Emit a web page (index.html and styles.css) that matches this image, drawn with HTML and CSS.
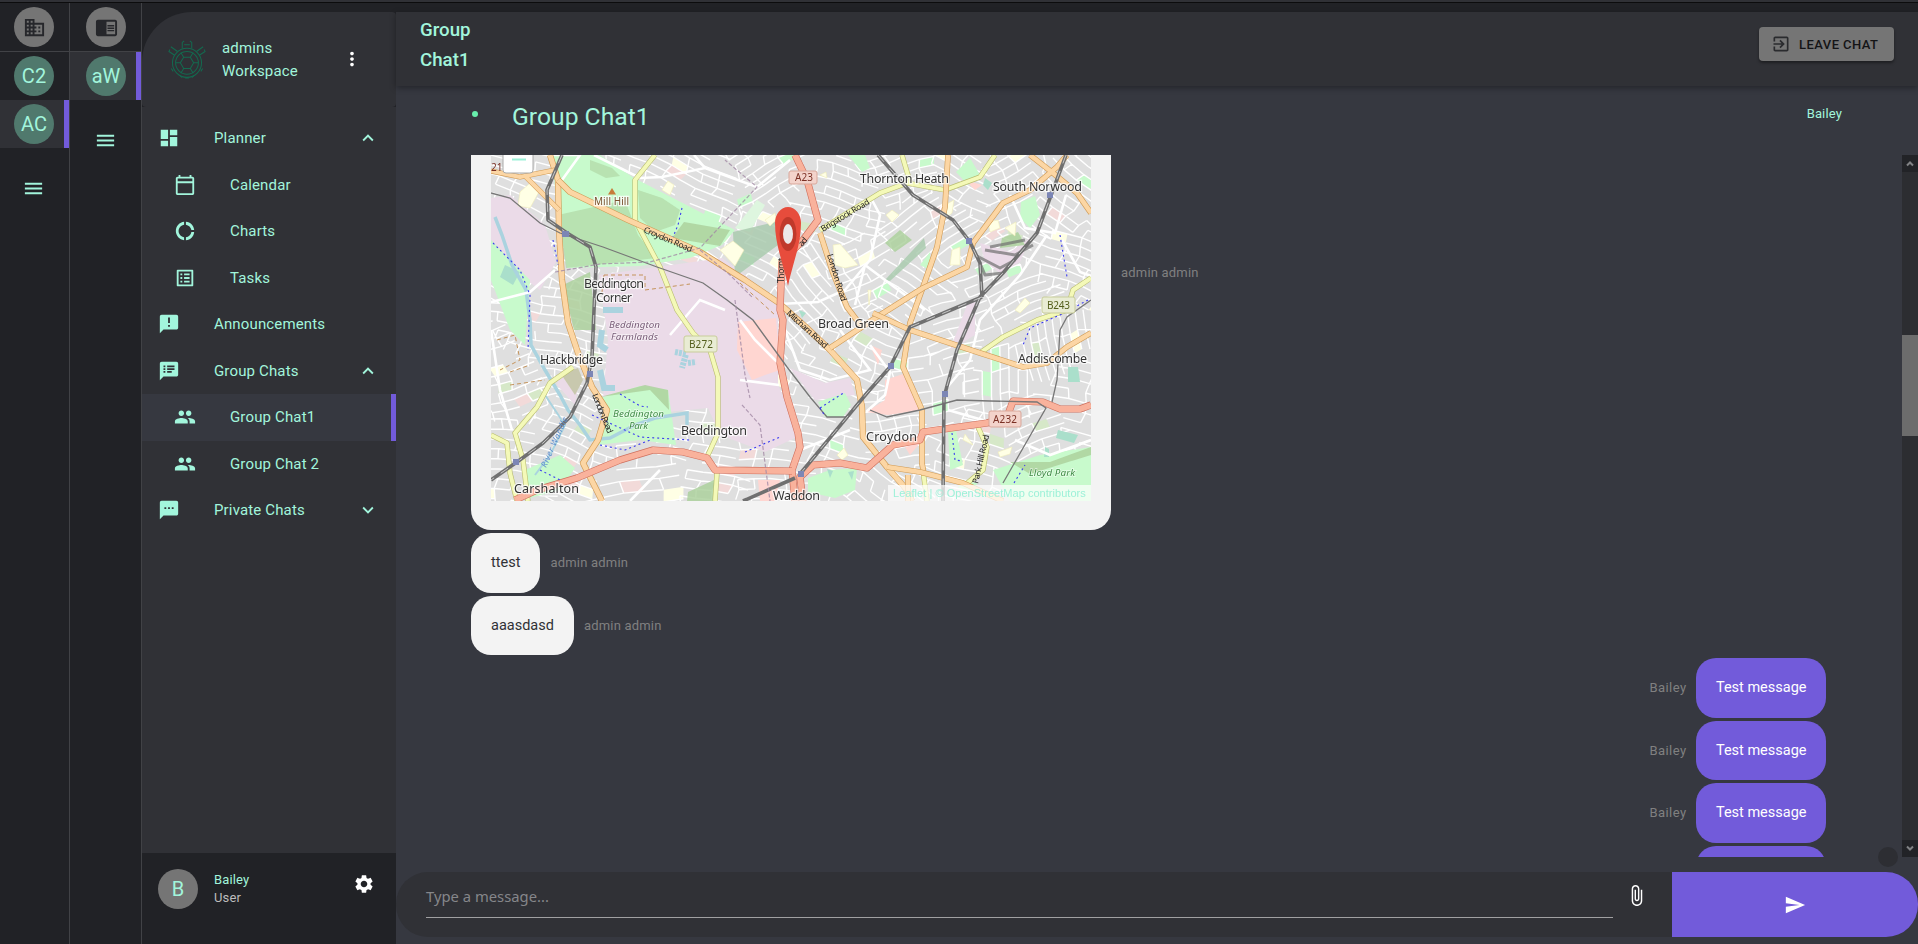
FILE: index.html
```html
<!DOCTYPE html>
<html lang="en">
<head>
<meta charset="utf-8">
<title>Group Chat1</title>
<link rel="stylesheet" href="styles.css">
</head>
<body>
<svg width="0" height="0" class="defs" aria-hidden="true">
  <symbol id="people" viewBox="0 0 24 24"><path d="M16 11c1.66 0 2.99-1.34 2.99-3S17.66 5 16 5c-1.66 0-3 1.34-3 3s1.34 3 3 3zm-8 0c1.66 0 2.99-1.34 2.99-3S9.66 5 8 5C6.34 5 5 6.34 5 8s1.34 3 3 3zm0 2c-2.33 0-7 1.17-7 3.5V19h14v-2.5c0-2.33-4.67-3.5-7-3.5zm8 0c-.29 0-.62.02-.97.05 1.16.84 1.97 1.97 1.97 3.45V19h6v-2.5c0-2.33-4.67-3.5-7-3.5z"/></symbol>
  <symbol id="menu" viewBox="0 0 24 24"><path d="M3 18h18v-2H3v2zm0-5h18v-2H3v2zm0-7v2h18V6H3z"/></symbol>
  <symbol id="less" viewBox="0 0 24 24"><path d="M12 8l-6 6 1.41 1.41L12 10.83l4.59 4.58L18 14z"/></symbol>
  <symbol id="more" viewBox="0 0 24 24"><path d="M16.59 8.59L12 13.17 7.41 8.59 6 10l6 6 6-6z"/></symbol>
</svg>
<div class="topbar"></div>
<div class="app">
  <div class="rail rail-a">
    <div class="rail-head"><div class="avatar grey"><svg class="icon s23 dark" viewBox="0 0 24 24"><path d="M12 7V3H2v18h20V7H12zM6 19H4v-2h2v2zm0-4H4v-2h2v2zm0-4H4V9h2v2zm0-4H4V5h2v2zm4 12H8v-2h2v2zm0-4H8v-2h2v2zm0-4H8V9h2v2zm0-4H8V5h2v2zm10 12h-8v-2h2v-2h-2v-2h2v-2h-2V9h8v10zm-2-8h-2v2h2v-2zm0 4h-2v2h2v-2z"/></svg></div></div>
    <div class="rail-item"><div class="avatar">C2</div></div>
    <div class="rail-item active"><div class="avatar">AC</div></div>
    <div class="rail-menu"><svg class="icon"><use href="#menu"/></svg></div>
  </div>
  <div class="rail rail-b">
    <div class="rail-head"><div class="avatar grey"><svg class="icon s23 dark" viewBox="0 0 24 24"><path d="M13 12h7v1.5h-7zm0-2.5h7V11h-7zm0 5h7V16h-7zM21 4H3c-1.1 0-2 .9-2 2v13c0 1.1.9 2 2 2h18c1.1 0 2-.9 2-2V6c0-1.1-.9-2-2-2zm0 15h-9V6h9v13z"/></svg></div></div>
    <div class="rail-item active"><div class="avatar">aW</div></div>
    <div class="rail-menu"><svg class="icon"><use href="#menu"/></svg></div>
  </div>

  <div class="sidebar">
    <div class="ws-head">
      <svg class="turtle" viewBox="0 0 40 42">
        <circle cx="20" cy="24" r="15.3"/><circle cx="20" cy="24" r="12"/>
        <path d="M16.5 18h7l3.5 6-3.5 6h-7L13 24zM16.5 18l-3-5M23.500 18l3-5M27 24h5M13 24H8M16.500 30l-3 5M23.500 30l3 5"/>
        <path d="M15 9V2.500l2-1.500M25 9V2.500L23 1M17 5h6M10 12L3 7M7 16l-6-4 1-2M30 12l7-5M33 16l6-4-1-2M3.500 30l2 3M36.500 30l-2 3M12 37l3 2.500M28 37l-3 2.500M18 40h4"/>
      </svg>
      <div class="ws-name">admins<br>Workspace</div>
      <svg class="icon white dots" viewBox="0 0 24 24"><path d="M12 8c1.100 0 2-.9 2-2s-.9-2-2-2-2 .9-2 2 .9 2 2 2zm0 2c-1.100 0-2 .9-2 2s.9 2 2 2 2-.9 2-2-.9-2-2-2zm0 6c-1.100 0-2 .9-2 2s.9 2 2 2 2-.9 2-2-.9-2-2-2z"/></svg>
    </div>
    <div class="nav">
      <div class="item"><svg class="icon" viewBox="0 0 24 24"><path d="M3 13h8V3H3v10zm0 8h8v-6H3v6zm10 0h8V11h-8v10zm0-18v6h8V3h-8z"/></svg><span>Planner</span><svg class="icon s22"><use href="#less"/></svg></div>
      <div class="item sub"><svg class="icon" viewBox="0 0 24 24"><path d="M20 3h-1V1h-2v2H7V1H5v2H4c-1.100 0-2 .9-2 2v16c0 1.100.9 2 2 2h16c1.100 0 2-.9 2-2V5c0-1.100-.9-2-2-2zm0 18H4V10h16v11zm0-13H4V5h16v3z"/></svg><span>Calendar</span></div>
      <div class="item sub"><svg class="icon" viewBox="0 0 24 24"><path d="M11 5.080V2c-5 .5-9 4.810-9 10s4 9.500 9 10v-3.080c-3-.48-6-3.400-6-6.920s3-6.440 6-6.920zM18.970 11H22c-.47-5-4-8.530-9-9v3.080C16 5.510 18.540 8 18.970 11zM13 18.920V22c5-.47 8.530-4 9-9h-3.030c-.43 3-2.970 5.490-5.970 5.920z"/></svg><span>Charts</span></div>
      <div class="item sub"><svg class="icon" viewBox="0 0 24 24"><path d="M19 5v14H5V5h14m1.100-2H3.900c-.5 0-.9.4-.9.9v16.200c0 .4.4.9.9.9h16.200c.4 0 .9-.5.9-.9V3.900c0-.5-.5-.9-.9-.9zM11 7h6v2h-6V7zm0 4h6v2h-6v-2zm0 4h6v2h-6zM7 7h2v2H7zm0 4h2v2H7zm0 4h2v2H7z"/></svg><span>Tasks</span></div>
      <div class="item"><svg class="icon" viewBox="0 0 24 24"><path d="M20 2H4c-1.100 0-1.990.9-1.990 2L2 22l4-4h14c1.100 0 2-.9 2-2V4c0-1.100-.9-2-2-2zm-7 9h-2V5h2v6zm0 4h-2v-2h2v2z"/></svg><span>Announcements</span></div>
      <div class="item"><svg class="icon" viewBox="0 0 24 24"><path d="M20 2H4c-1.100 0-1.990.9-1.990 2L2 22l4-4h14c1.100 0 2-.9 2-2V4c0-1.100-.9-2-2-2zM8 14H6v-2h2v2zm0-3H6V9h2v2zm0-3H6V6h2v2zm7 6h-5v-2h5v2zm3-3h-8V9h8v2zm0-3h-8V6h8v2z"/></svg><span>Group Chats</span><svg class="icon s22"><use href="#less"/></svg></div>
      <div class="item sub active"><svg class="icon"><use href="#people"/></svg><span>Group Chat1</span></div>
      <div class="item sub"><svg class="icon"><use href="#people"/></svg><span>Group Chat 2</span></div>
      <div class="item"><svg class="icon" viewBox="0 0 24 24"><path d="M20 2H4c-1.100 0-1.990.9-1.990 2L2 22l4-4h14c1.100 0 2-.9 2-2V4c0-1.100-.9-2-2-2zM9 11H7V9h2v2zm4 0h-2V9h2v2zm4 0h-2V9h2v2z"/></svg><span>Private Chats</span><svg class="icon s22"><use href="#more"/></svg></div>
    </div>
    <div class="user">
      <div class="avatar grey">B</div>
      <div class="user-text"><div>Bailey</div><div class="role">User</div></div>
      <svg class="icon s22 white" viewBox="0 0 24 24"><path d="M19.140 12.940c.04-.3.060-.61.060-.94 0-.32-.02-.64-.07-.94l2.030-1.580c.18-.14.230-.41.120-.61l-1.920-3.320c-.12-.22-.37-.29-.59-.22l-2.390.96c-.5-.38-1.030-.7-1.620-.94l-.36-2.540c-.04-.24-.24-.41-.48-.41h-3.840c-.24 0-.43.170-.47.410l-.36 2.540c-.59.240-1.130.570-1.620.94l-2.390-.96c-.22-.08-.47 0-.59.220L2.740 8.870c-.12.210-.08.470.12.610l2.030 1.580c-.05.3-.09.630-.09.94s.02.640.070.94l-2.030 1.580c-.18.140-.23.410-.12.610l1.920 3.320c.12.220.37.290.59.220l2.390-.96c.5.380 1.030.7 1.620.94l.36 2.540c.05.240.24.410.48.410h3.840c.24 0 .44-.17.470-.41l.36-2.540c.59-.24 1.130-.56 1.620-.94l2.390.96c.22.080.47 0 .59-.22l1.920-3.320c.12-.22.070-.47-.12-.61l-2.010-1.580zM12 15.600c-1.980 0-3.600-1.620-3.600-3.600s1.620-3.600 3.600-3.600 3.600 1.620 3.600 3.600-1.620 3.600-3.600 3.600z"/></svg>
    </div>
  </div>

  <div class="main">
    <div class="header">
      <h1>Group<br>Chat1</h1>
      <button class="leave"><svg class="icon s20" viewBox="0 0 24 24"><path d="M10.090 15.590L11.500 17l5-5-5-5-1.410 1.410L12.670 11H3v2h9.670l-2.580 2.590zM19 3H5c-1.110 0-2 .9-2 2v4h2V5h14v14H5v-4H3v4c0 1.100.89 2 2 2h14c1.100 0 2-.9 2-2V5c0-1.100-.9-2-2-2z"/></svg><span>LEAVE CHAT</span></button>
    </div>
    <div class="title"><i class="online"></i><h2>Group Chat1</h2><span class="me">Bailey</span></div>
    <div class="scroller">
      <div class="messages">
        <div class="row map-row"><div class="bubble map-bubble">
          <svg class="map" viewBox="491 155 600 346">
            <rect x="491" y="155" width="600" height="346" fill="#dfdfdf"/>
            <g id="patches"></g>
            <path id="streets" fill="none" stroke="#fff" stroke-width="1.400"/>
            <g fill="#ebdbe8">
              <path d="M599 275L722 258L745 275L778 303L778 385L790 410L797 437L765 452L720 435L708 408L668 412L603 398L608 340Z"/>
              <path d="M491 198L510 195L545 225L556 262L540 290L520 275L503 252L491 240Z"/>
              <path d="M560 372L580 375L575 405L557 385Z"/>
              <path d="M790 368L825 383L850 378L855 395L815 400Z"/>
              <path d="M980 243L1010 252L1030 238L1020 262L1000 273L985 262ZM967 305L975 298L975 335L950 350Z"/>
            </g>
            <g fill="#c8facc">
              <path d="M552 155L600 155L634 178L700 212L735 230L722 245L690 258L640 266L567 268L556 200Z"/>
              <path d="M491 240L512 262L530 280L525 345L510 330L491 280Z"/>
              <path d="M600 398L640 386L668 390L676 445L640 440L598 445L608 415Z"/>
              <path d="M525 470L560 455L575 468L560 490L530 498Z"/>
              <path d="M818 402L845 393L851 405L843 417L825 417Z"/>
              <path d="M808 478L830 470L857 468L855 490L835 498L808 492Z"/>
              <path d="M993 470L1040 455L1091 447L1091 501L1010 501Z"/>
              <path d="M848 155L865 155L870 168L862 172ZM956 172L970 158L980 175L968 185ZM1021 202L1035 196L1040 215L1030 228L1020 218ZM920 265L930 252L930 270ZM948 430L956 430L963 465L950 470Z"/>
              <path d="M765 205L757 200L735 228L750 232Z" fill="#def6df"/>
            </g>
            <g fill="#add19e" opacity=".85">
              <path d="M590 160L612 168L620 176L606 178L590 170ZM638 190L662 198L680 210L675 225L655 232L640 218ZM558 215L625 200L638 235L656 258L622 262L566 268Z" opacity=".7"/>
              <path d="M684 222L730 230L720 246L672 238ZM563 285L590 272L596 330L574 330Z"/>
              <path d="M885 280L924 238L926 248L890 281Z" fill="#aacbaf"/>
              <path d="M733 232L775 222L778 245L735 277Z" fill="#aacbaf"/>
              <path d="M600 397L645 385L668 390L669 410L650 390ZM688 492L714 480L714 501L687 501Z"/>
              <path d="M1010 462L1050 462L1091 447L1091 455L1030 474ZM885 243L900 230L912 240L895 252ZM1002 238L1018 232L1025 245L1000 248Z"/>
            </g>
            <g fill="#c8c8ae"><path d="M561 374L578 368L583 380L575 395Z"/></g>
            <g fill="#ffffe5" stroke="#f0ecb8" stroke-width=".6">
              <path d="M520 192L530 183L540 190L530 208L518 206ZM662 190L668 181L674 185L670 195ZM720 250L733 241L744 250L735 266ZM765 220L775 213L776 220L770 226ZM835 265L833 245L840 244L858 265L845 268ZM886 215L892 210L899 215L892 222ZM945 205L954 200L952 213L947 217ZM988 222L998 220L1000 228L990 232ZM1005 228L1016 222L1015 236ZM1015 310L1025 298L1030 303L1020 313ZM952 250L960 247L960 265L950 265ZM868 290L871 290L869 305ZM837 455L844 448L848 455L842 460ZM963 440L965 434L973 445ZM998 452L1012 447L1010 454L1000 457ZM820 175L826 172L827 178Z"/>
            </g>
            <g fill="#ffd6d1">
              <path d="M738 322L776 318L780 370L765 375L752 380L737 350Z"/>
              <path d="M885 380L903 374L921 410L888 415L866 412L885 400Z"/>
              <path d="M758 480L780 480L775 501L760 501ZM870 345L882 350L878 365ZM965 180L982 185L975 190ZM905 447L920 443L910 455Z"/>
            </g>
            <g fill="#aadfcb">
              <path d="M505 265L520 272L513 285L500 277ZM985 178L992 183L988 190L983 185ZM799 310L806 313L802 318ZM827 469L833 471L830 478ZM848 472L854 471L852 480ZM1068 367L1078 367L1080 382L1068 382ZM1058 430L1078 435L1074 443L1056 438ZM1045 447L1049 449L1049 457L1044 457Z"/>
            </g>
            <g fill="none" stroke="#aad3df" stroke-width="3.500">
              <path d="M495 217L502 235L512 265L526 290L530 320L531 345L545 370L560 395L568 410L580 425L590 440L610 438L635 425L655 418L687 413L687 425"/>
              <path d="M545 395L555 410L565 425L550 455L535 475" stroke-width="2"/>
              <path d="M603 310L623 310M602 330L600 345L607 350M600 370L604 388L615 388" stroke-width="6"/>
              <path d="M675 352L686 354L682 368M688 363L696 362" stroke-width="6" stroke-dasharray="3 1"/>
            </g>
            <g fill="none" stroke="#fff" stroke-width="2.600">
              <path d="M594 155L640 178L662 177L705 168L757 187L790 160M705 168L694 155M491 302L530 292L555 270M491 330L500 390L512 430M550 155L580 155L562 180"/>
              <path d="M779 304L818 302L845 290L870 260L880 215L872 200M865 265L925 310M855 305L865 265M1010 195L1025 228L1055 233L1066 195M1047 235L1020 275L980 320L970 360L945 390M1062 240L1080 272L1091 276M740 380L779 385M785 330L800 370L830 380L870 370L840 330M740 320L755 340L775 360L782 365"/>
              <path d="M870 345L890 372L885 395L866 412M630 501L660 470M800 450L850 430M948 410L1000 425M1015 440L1050 455L1091 440M670 335L700 300L725 310"/>
            </g>
            <g id="casing" fill="none" stroke-linejoin="round"></g>
            <g fill="none" stroke="#777" stroke-width="1.300">
              <path d="M491 193L510 198L540 223L560 233L603 247L657 267L703 283L727 300L753 320L787 367L810 397L827 417L847 417L856 405M870 410L887 417L920 410L957 400L990 401L1037 402L1046 408L1003 483M1060 330L1057 380L1052 402M1091 300L1067 317L1060 330"/>
            </g>
            <g fill="none" stroke="#707070" stroke-width="3.600" stroke-linejoin="round">
              <path d="M562 155L547 190L548 220L567 233L590 247L596 267L594 310L592 357L587 383L570 417L543 443L517 462L491 480"/>
              <path d="M878 155L913 195L953 220L970 242L980 263L982 297M1066 155L1037 233L1003 273L980 297L957 350L944 397L943 501M982 297L910 327L890 367L867 393L800 474M743 501L795 478"/>
              <path d="M975 255L1000 268L1015 260M985 250L1015 255L1033 245M990 247L1025 240M1003 273L985 275L980 263" stroke-width="3" opacity=".7"/>
            </g>
            <g fill="none" stroke="#ddd" stroke-width=".8" stroke-dasharray="9 8">
              <path d="M562 155L547 190L548 220L567 233L590 247L596 267L594 310L592 357L587 383L570 417L543 443L517 462L491 480M878 155L913 195L953 220L970 242L980 263L982 297M1066 155L1037 233L1003 273L980 297L957 350L944 397L943 501M982 297L910 327L890 367L867 393L800 474"/>
            </g>
            <g fill="none" stroke="#3a3af0" stroke-width="1.100" stroke-dasharray="2 3">
              <path d="M682 208L678 225L673 237M493 243L520 270L530 295L528 350M553 240L558 265M620 394L640 406L648 407M592 415L640 437L690 440M600 445L625 450L650 440M745 452L780 437M820 408L845 392M820 408L825 416M1060 235L1067 277M1088 300L1060 315L1030 328L1023 345M952 433L955 460L963 461M540 470L560 480M1014 483L1025 465"/>
            </g>
            <g fill="none" stroke="#a28aa5" stroke-width="1.200" stroke-dasharray="4 2" opacity=".8"><path d="M555 272L600 264L650 262L700 248L757 187L725 160M700 250L730 275L752 297M735 300L745 375L750 398M742 405L760 425L770 501"/></g>
            <g fill="none" stroke="#c4935a" stroke-width="1" stroke-dasharray="4 3"><path d="M604 275L645 275L645 290L690 284M604 275L602 292M740 283L775 315M497 340L515 335L520 360L500 370M510 372L530 365M510 385L545 380"/></g>
            <g fill="#7c86b5"><path d="M562 231h7v6h-7zM587 371h6v6h-6zM513 459h6v6h-6zM966 238h6v6h-6zM1047 192h6v6h-6zM888 363h6v6h-6zM942 391h6v6h-6zM798 471h6v6h-6z"/></g>
            <path d="M612 188l4 6.500h-8z" fill="#c77c3a"/>
            <g class="shield"><rect x="684" y="336" width="33" height="16" rx="2"/><rect x="1042" y="297" width="33" height="16" rx="2"/><g class="red"><rect x="789" y="171" width="28" height="13" rx="2"/><rect x="989" y="411" width="32" height="16" rx="2"/></g></g>
            <g class="ref"><text x="689" y="348" textLength="24">B272</text><text x="1047" y="309" textLength="23">B243</text><text x="993" y="423" textLength="24" class="ref-red">A232</text><text x="795" y="181" textLength="18" class="ref-red">A23</text><text x="491" y="171" class="ref-red">217</text></g>
            <g class="place">
              <text x="584" y="288" textLength="60">Beddington</text><text x="596" y="302" textLength="36">Corner</text>
              <text x="540" y="364" textLength="63">Hackbridge</text><text x="681" y="435" textLength="66">Beddington</text>
              <text x="514" y="493" textLength="65">Carshalton</text><text x="773" y="500" textLength="47">Waddon</text>
              <text x="860" y="183" textLength="89">Thornton Heath</text><text x="993" y="191" textLength="89">South Norwood</text>
              <text x="818" y="328" textLength="71">Broad Green</text><text x="1018" y="363" textLength="69">Addiscombe</text><text x="866" y="441" textLength="51">Croydon</text>
            </g>
            <text x="594" y="205" textLength="35" class="place hill">Mill Hill</text>
            <g class="area"><text x="609" y="328" textLength="51">Beddington</text><text x="611" y="340" textLength="47">Farmlands</text></g>
            <g class="area park"><text x="613" y="417" textLength="51">Beddington</text><text x="629" y="429" textLength="19">Park</text><text x="1029" y="476" textLength="46">Lloyd Park</text></g>
            <g class="road-name">
              <text transform="translate(643 232) rotate(23)" textLength="52">Croydon Road</text>
              <text transform="translate(823 232) rotate(-31)" textLength="55">Brigstock Road</text>
              <text transform="translate(827 255) rotate(73)" textLength="49">London Road</text>
              <text transform="translate(786 314) rotate(42)" textLength="52">Mitcham Road</text>
              <text transform="translate(592 395) rotate(68)" textLength="42">London Road</text>
              <text transform="translate(784 283) rotate(-90)" textLength="25">Thornt</text>
              <text transform="translate(802 247) rotate(-48)" textLength="9">ad</text>
              <text transform="translate(978 484) rotate(-77)" textLength="50">Park Hill Road</text>
              <text transform="translate(546 468) rotate(-66)" textLength="54" class="river">River Wandle</text>
            </g>
            <g><rect x="503" y="130" width="30" height="43" rx="3" fill="#fff" stroke="#aaa"/><path d="M512 159.500h14" stroke="#9df1d8" stroke-width="2"/></g>
            <path d="M788 286C783 262 775 245 775 223a13 16 0 0 1 26 0C801 245 793 262 788 286Z" fill="#e74c3c"/>
            <ellipse cx="788" cy="234" rx="8.500" ry="17" fill="#c0392b"/><ellipse cx="788" cy="234" rx="5" ry="10" fill="#ece8e8"/>
          </svg>
          <div class="attribution">Leaflet | © OpenStreetMap contributors</div>
        </div><span class="from">admin admin</span></div>
        <div class="row"><div class="bubble">ttest</div><span class="from">admin admin</span></div>
        <div class="row"><div class="bubble">aaasdasd</div><span class="from">admin admin</span></div>
        <div class="row mine"><div class="bubble">Test message</div><span class="from">Bailey</span></div>
        <div class="row mine"><div class="bubble">Test message</div><span class="from">Bailey</span></div>
        <div class="row mine"><div class="bubble">Test message</div><span class="from">Bailey</span></div>
        <div class="row mine"><div class="bubble">Test message</div><span class="from">Bailey</span></div>
      </div>
      <div class="scrollbar">
        <svg class="arrow" viewBox="0 0 16 17"><path d="M5 10.500l3-3 3 3"/></svg>
        <div class="track"><div class="thumb"></div></div>
        <svg class="arrow" viewBox="0 0 16 17"><path d="M5 6.500l3 3 3-3"/></svg>
      </div>
    </div>
    <div class="fab"></div>
    <div class="composer">
      <div class="field">Type a message...</div>
      <svg class="icon s23 white clip" viewBox="0 0 24 24"><path d="M16.500 6v11.500c0 2.210-1.790 4-4 4s-4-1.790-4-4V5c0-1.380 1.120-2.500 2.500-2.500s2.500 1.120 2.500 2.500v10.500c0 .55-.45 1-1 1s-1-.45-1-1V6H10v9.500c0 1.380 1.120 2.500 2.500 2.500s2.500-1.120 2.500-2.500V5c0-2.210-1.790-4-4-4S7 2.790 7 5v12.500c0 3.040 2.460 5.500 5.500 5.500s5.500-2.460 5.500-5.500V6h-1.500z"/></svg>
      <div class="send"><svg class="icon s22 white" viewBox="0 0 24 24"><path d="M2.010 21L23 12 2.010 3 2 10l15 2-15 2z"/></svg></div>
    </div>
  </div>
</div>
<script src="map.js"></script>
</body>
</html>
```

FILE: styles.css
```css
* { box-sizing: border-box; }
body { margin: 0; width: 1918px; height: 944px; overflow: hidden; background: #212226; color: #a2f5dc; font-family: Roboto, "Liberation Sans", sans-serif; font-size: 15px; display: flex; flex-direction: column; }
h1, h2 { margin: 0; }
.defs { position: absolute; }
.topbar { height: 3px; background: #303136; border-bottom: 1px solid #0c0c0d; flex: none; }
.app { display: flex; flex: 1; min-height: 0; }
.icon { width: 24px; height: 24px; fill: currentColor; flex: none; display: block; }
.icon.s23 { width: 23px; height: 23px; }
.icon.s22 { width: 22px; height: 22px; }
.icon.s20 { width: 20px; height: 20px; }
.white { color: #fff; }
.dark { color: #26272b; }

.rail { border-right: 1px solid #414246; flex: none; }
.rail-a { width: 70px; }
.rail-b { width: 72px; }
.rail-head, .rail-item { height: 48px; padding-left: 14px; display: flex; align-items: center; }
.rail-head { height: 49px; border-bottom: 1px solid #414246; }
.rail-b .rail-head, .rail-b .rail-item { padding-left: 16px; }
.rail-item.active { background: #303136; border-right: 5px solid #725bda; }
.avatar { width: 40px; height: 40px; border-radius: 50%; background: #50796d; display: flex; align-items: center; justify-content: center; font-size: 20px; flex: none; }
.avatar.grey { background: #757575; }
.rail-menu { padding: 29px 0 0 22px; }
.rail-menu .icon { width: 23px; height: 23px; }
.rail-b .rail-menu { padding-left: 24px; }

.sidebar { width: 254px; display: flex; flex-direction: column; flex: none; padding-top: 9px; }
.ws-head { height: 95px; background: #303136; border-radius: 50px 4px 4px 4px; display: flex; padding: 25px 33px 0 26px; }
.turtle { width: 38px; height: 42px; margin-top: 2px; fill: none; stroke: #14694f; stroke-width: 1.1; }
.ws-name { font-size: 15px; line-height: 23px; margin-left: 16px; letter-spacing: .15px; flex: 1; }
.dots { width: 22px; height: 22px; margin-top: 11px; }
.nav { background: #303136; flex: 1; padding-top: 8px; }
.item { height: 46.500px; padding: 0 17px 0 16px; display: flex; align-items: center; }
.item span { margin-left: 34px; flex: 1; letter-spacing: .15px; }
.item.sub { padding-left: 32px; }
.item .icon { width: 22px; height: 22px; }
.item.active { background: #363840; border-right: 5px solid #725bda; }
.user { height: 91px; background: #212226; padding: 16px 21px 0 16px; display: flex; font-size: 13px; line-height: 18px; letter-spacing: .15px; }
.user-text { margin-left: 16px; padding-top: 2px; flex: 1; }
.role { color: #bdbdbd; }
.user > .icon { margin-top: 4px; }

.main { flex: 1; min-width: 0; background: #363840; margin-top: 9px; display: flex; flex-direction: column; position: relative; }
.header { height: 74px; flex: none; background: #303136; box-shadow: 0 2px 6px rgba(0,0,0,.35); display: flex; justify-content: space-between; padding: 2px 24px 0 24px; }
.header h1 { font-size: 18.700px; line-height: 30px; font-weight: 500; padding-top: 1px; }
.leave { height: 34px; width: 135px; margin-top: 13px; padding: 0 0 0 12px; background: #757575; border: 0; border-radius: 4px; box-shadow: 0 2px 3px rgba(0,0,0,.4); display: flex; align-items: center; gap: 8px; font: 500 13px Roboto, sans-serif; letter-spacing: .45px; color: #141416; }
.leave .icon { color: #2a2b2e; }
.title { height: 69px; flex: none; display: flex; align-items: flex-start; }
.online { width: 6px; height: 6px; border-radius: 50%; background: #68efad; margin: 25px 0 0 76px; }
.title h2 { font-weight: 400; font-size: 24.700px; line-height: 30px; margin: 16px 0 0 34px; flex: 1; }
.me { font-size: 13px; margin: 20px 76px 0 0; letter-spacing: .15px; }
.scroller { height: 702px; flex: none; display: flex; overflow: hidden; }
.messages { flex: 1; padding: 0 76px 0 75px; }
.row { display: flex; align-items: center; margin-bottom: 3px; }
.row.mine { flex-direction: row-reverse; }
.bubble { height: 59.500px; border-radius: 20px; padding: 0 20px; background: #f3f3f3; color: #303136; font-size: 14.500px; display: flex; align-items: center; }
.mine .bubble { background: #725bda; color: #fff; padding: 0 19.500px; }
.from { margin: 0 10px; font-size: 13px; letter-spacing: .2px; color: #808080; }
.mine .from { letter-spacing: .4px; }
.map-row .from { margin-top: -140px; }
.bubble.map-bubble { height: 375px; width: 640px; padding: 0 20px; border-radius: 0 0 20px 20px; align-items: flex-start; position: relative; }
.map { width: 600px; height: 346px; display: block; font-family: "Noto Sans", "DejaVu Sans", sans-serif; }
.attribution { position: absolute; right: 20px; bottom: 29px; height: 16px; width: 203px; padding-left: 5px; background: rgba(255,255,255,.7); font: 11px/16px "Liberation Sans", Arial, sans-serif; letter-spacing: .04px; white-space: nowrap; color: #9df1d8; }
.scrollbar { width: 16px; background: #2c2d31; display: flex; flex-direction: column; }
.arrow { width: 16px; height: 17px; background: #222327; fill: none; stroke: #818285; stroke-width: 2; }
.track { flex: 1; padding-top: 163px; }
.thumb { height: 101px; background: #6c6c6c; }
.fab { position: absolute; left: 1482px; top: 835px; width: 20px; height: 20px; border-radius: 50%; background: #2d2e33; }
.composer { height: 65px; margin-top: 15px; flex: none; background: #303136; border-radius: 32px; display: flex; overflow: hidden; }
.field { width: 1187px; height: 46px; margin-left: 30px; border-bottom: 1px solid #a0a0a2; font: 14.800px/48px "Noto Sans", sans-serif; color: #85868a; }
.clip { margin: 12px 0 0 12px; }
.send { margin-left: auto; width: 246px; background: #725bda; display: flex; align-items: center; justify-content: center; }

.place { font-size: 12.500px; fill: #333; stroke: #fff; stroke-opacity: .75; stroke-width: 2.500px; paint-order: stroke; }
.place.hill { font-size: 10px; fill: #7a5230; }
.area { font-size: 9.800px; font-style: italic; fill: #775a76; stroke: #fff; stroke-opacity: .6; stroke-width: 1.500px; paint-order: stroke; }
.area.park { fill: #3f8b45; }
.road-name { font-size: 8.500px; fill: #222; }
.road-name .river { font-style: italic; fill: #5f8fce; }
.shield { fill: #e9ecd4; stroke: #c8cd9a; stroke-width: 1; }
.shield .red { fill: #f3d3cb; stroke: #d9a79a; }
.ref { font-size: 10px; fill: #545f1c; }
.ref-red { fill: #7a2f24; }
```

FILE: map.js
```js
// Deterministic pseudo-random numbers keep the street grid stable between loads.
let seed = 11;
const rnd = () => (seed = (seed * 16807) % 2147483647) / 2147483647;

// Neighbourhoods: centre x, centre y, street angle, block length, block depth.
const areas = [
  [520,165,.3,16,9],[520,225,.5,18,11],[510,380,-.3,14,9],[545,350,.2,13,9],[500,450,.1,16,10],
  [570,440,.4,14,9],[640,480,-.15,20,12],[690,400,.1,16,10],[700,180,.45,17,8],[750,165,-.5,15,8],
  [760,250,.5,16,9],[770,470,.05,16,10],[840,200,.3,16,8],[850,280,-.45,17,9],[800,290,.9,16,9],
  [890,170,-.3,15,8],[920,230,-.6,17,8],[900,290,.6,16,9],[850,350,.4,15,10],[960,170,.5,15,9],
  [1000,170,-.5,15,9],[1060,200,.7,16,9],[1060,260,.35,15,9],[1020,300,-.4,15,8],[950,330,-.3,14,9],
  [1000,370,1.500,24,9],[1040,340,1.350,20,8],[880,430,-.1,15,10],[970,450,.3,15,10],[1020,430,-.4,15,9],
  [1070,390,.2,18,10],[830,440,.25,15,9],[870,490,.6,14,10],[930,390,-.2,16,12],[700,480,.2,16,9]
];
const nearest = (x, y) => {
  let best = 0, d = Infinity;
  areas.forEach((a, i) => { const q = (a[0]-x)**2 + (a[1]-y)**2; if (q < d) { d = q; best = i; } });
  return best;
};
let d = '', patches = '';
areas.forEach(([cx, cy, a, w, h], k) => {
  const c = Math.cos(a), s = Math.sin(a);
  const at = (i, j) => {
    const u = i*w + 2*Math.sin(j*1.7+k), v = j*h + 1.5*Math.sin(i*1.3+k);
    return [(cx+u*c-v*s).toFixed(1), (cy+u*s+v*c).toFixed(1)];
  };
  for (let i = -8; i < 8; i++) for (let j = -12; j < 12; j++) {
    const p = at(i, j);
    if (nearest(+p[0], +p[1]) !== k) continue;
    if (rnd() < .84) d += `M${p}L${at(i+1, j)}`;
    if (rnd() < .5) d += `M${p}L${at(i, j+1)}`;
    if (rnd() < .05) patches += `<path d="M${p}L${at(i+1,j)}L${at(i+1,j+1)}L${at(i,j+1)}Z" fill="${['#c8facc','#ffffe5','#f2dad9','#d6e8c8'][Math.floor(rnd()*4)]}"/>`;
  }
});
document.getElementById('streets').setAttribute('d', d);
document.getElementById('patches').innerHTML = patches;

// Classified roads: path, casing colour, fill colour, width.
const roads = [
  ['M655 155L635 180L635 220L660 267L677 310L693 333L710 350L718 377L718 433L707 457L717 473L715 501','#b9bd70','#f4f9b8',4],
  ['M820 230L880 193L907 183L945 190L980 177L995 155M902 155L910 182','#b9bd70','#f4f9b8',4],
  ['M1091 278L1073 290L1067 310L1037 320L1003 337L980 353','#b9bd70','#f4f9b8',4],
  ['M573 367L550 383L537 407L515 433L523 460L528 501M491 435L507 443L510 473L517 501','#b9bd70','#f4f9b8',4],
  ['M978 427L987 447L983 470L965 485M922 463L927 501','#b9bd70','#f4f9b8',4],
  ['M550 155L558 180L559 230L562 280L568 323L578 353L592 387L607 410L598 440L583 463L602 501','#cf9a55','#fcd6a4',5],
  ['M491 171L520 177L555 170M525 176L559 210','#cf9a55','#fcd6a4',4],
  ['M558 180L570 192L628 220L700 252L745 280L779 303L807 328L830 350L857 380L862 407L863 437L887 467L907 490L912 501','#cf9a55','#fcd6a4',5],
  ['M820 233L833 273L847 307L862 327M948 155L945 207L937 247L923 287L910 323L903 367L922 410L922 463L924 475','#cf9a55','#fcd6a4',4.5],
  ['M830 348L877 317L923 288L967 267L973 243L1003 203L1030 190L1057 167L1067 155M1030 155L1053 173L1077 193L1091 213','#cf9a55','#fcd6a4',4.5],
  ['M873 313L910 330L980 353L1023 367L1047 363L1067 347L1091 333M887 467L920 472L963 483L1003 501M908 475L908 501','#cf9a55','#fcd6a4',4.5],
  ['M795 155L807 180L818 220L803 240L782 262L780 310L783 320L780 363L787 397L798 433L800 447L792 470L795 501','#cf6f5d','#f9b29c',6],
  ['M515 500L537 490L577 478L620 460L653 450L683 452L707 458L715 470L792 471M803 501L800 477L813 465L840 463L867 468L893 445L920 440L923 432L987 423L1007 417L1013 401L1043 402L1060 409L1080 409L1091 405','#cf6f5d','#f9b29c',6]
];
document.getElementById('casing').innerHTML = roads.map(([p, edge, fill, w]) =>
  `<path d="${p}" stroke="${edge}" stroke-width="${w+1.2}"/><path d="${p}" stroke="${fill}" stroke-width="${w}"/>`).join('');
```
